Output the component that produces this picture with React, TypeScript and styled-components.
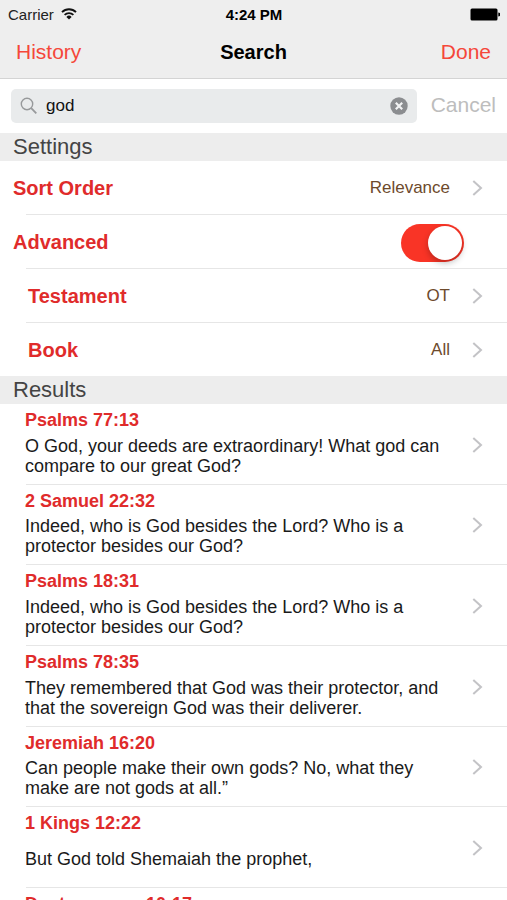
import React, { useState } from "react";
import styled, { createGlobalStyle, css } from "styled-components";

const GlobalStyle = createGlobalStyle`
  *, *::before, *::after { box-sizing: border-box; }
  html, body, #root { height: 100%; }
  body {
    margin: 0;
    overflow: hidden;
    background: #fff;
    color: #111;
    font-family: "Liberation Sans", Arial, sans-serif;
  }
  h1, h2, h3, p, ul { margin: 0; padding: 0; }
  ul { list-style: none; }
  button, input { font: inherit; border: 0; padding: 0; background: none; }
  button { cursor: pointer; }
`;

const Screen = styled.main`
  height: 100%;
  display: flex;
  flex-direction: column;
  overflow: hidden;
`;

const TopBar = styled.header`
  flex: none;
  background: #eee;
  border-bottom: 1px solid #d4d4d4;
`;

const StatusBar = styled.div`
  display: grid;
  grid-template-columns: 1fr auto 1fr;
  align-items: center;
  height: 28px;
  padding: 0 7px 0 8px;
  font-size: 15px;
  color: #222;
`;

const Carrier = styled.span`
  display: flex;
  align-items: center;
  gap: 7px;
`;

const Clock = styled.time`
  font-weight: 700;
  color: #000;
`;

const Battery = styled.svg`
  justify-self: end;
`;

const NavBar = styled.div`
  display: grid;
  grid-template-columns: 1fr auto 1fr;
  align-items: center;
  height: 50px;
  padding: 0 16px 2px;
`;

const NavButton = styled.button<{ $end?: boolean }>`
  justify-self: ${(p) => (p.$end ? "end" : "start")};
  font-size: 21px;
  line-height: 28px;
  color: #f5473a;
`;

const NavTitle = styled.h1`
  font-size: 20px;
  line-height: 28px;
  color: #000;
`;

const SearchBar = styled.form`
  flex: none;
  display: flex;
  align-items: center;
  gap: 14px;
  height: 54px;
  padding: 0 11px;
`;

const Field = styled.label`
  flex: 1;
  min-width: 0;
  display: flex;
  align-items: center;
  gap: 8px;
  height: 34px;
  padding: 0 9px;
  border-radius: 5px;
  background: #e9ebec;
`;

const FieldInput = styled.input`
  flex: 1;
  min-width: 0;
  font-size: 17px;
  line-height: 24px;
  color: #111;
  outline: none;
`;

const ClearButton = styled.button`
  display: flex;
`;

const CancelButton = styled.button`
  font-size: 21px;
  line-height: 28px;
  padding-bottom: 2px;
  color: #bdbdbd;
`;

const SectionHeader = styled.h2`
  flex: none;
  padding: 0 13px;
  background: #ededed;
  font-size: 22px;
  font-weight: 400;
  line-height: 28px;
  color: #444;
`;

const SettingList = styled.ul`
  flex: none;
`;

const ResultList = styled.ul`
  flex: none;
  display: grid;
  grid-auto-rows: minmax(81px, auto) minmax(80px, auto) minmax(81px, auto);
`;

const divider = css`
  &:not(:last-child)::after {
    content: "";
    position: absolute;
    left: 26px;
    right: 0;
    bottom: 0;
    height: 1px;
    background: #e6e6e6;
  }
`;

const SettingItem = styled.li`
  position: relative;
  ${divider}

  &:not(:last-child) {
    padding-bottom: 1px;
  }
`;

const settingRow = css<{ $nested?: boolean }>`
  display: flex;
  align-items: center;
  width: 100%;
  height: 53px;
  padding: 0 24px 0 ${(p) => (p.$nested ? 28 : 13)}px;
  text-align: left;
`;

const SettingButton = styled.button<{ $nested?: boolean }>`
  ${settingRow}
`;

const SettingLabel = styled.label<{ $nested?: boolean }>`
  ${settingRow}
  padding-right: 43px;
`;

const SettingName = styled.span`
  flex: 1;
  font-size: 20px;
  font-weight: 700;
  line-height: 28px;
  color: #e02b2b;
`;

const SettingValue = styled.span`
  margin-right: 22px;
  font-size: 17px;
  line-height: 24px;
  color: #6d4a2c;
`;

const Switch = styled.input`
  appearance: none;
  flex: none;
  display: flex;
  align-items: center;
  width: 63px;
  height: 38px;
  margin: 2px 0 0;
  padding: 0 2px;
  border-radius: 19px;
  background: #d8d8d8;
  cursor: pointer;

  &::before {
    content: "";
    width: 34px;
    height: 34px;
    border-radius: 50%;
    background: #fff;
    box-shadow: 0 3px 6px rgba(0, 0, 0, 0.25);
  }

  &:checked {
    justify-content: flex-end;
    background: #f93426;
  }
`;

const ResultItem = styled.li`
  position: relative;
  display: flex;
  ${divider}
`;

const ResultButton = styled.button`
  display: flex;
  align-items: center;
  width: 100%;
  padding: 0 24px 0 25px;
  text-align: left;
`;

const ResultBody = styled.span`
  flex: 1;
  align-self: stretch;
  display: flex;
  flex-direction: column;
  padding: 5px 20px 8px 0;
`;

const Reference = styled.span`
  font-size: 18px;
  font-weight: 700;
  line-height: 22px;
  color: #e02b2b;
`;

const Verse = styled.span`
  flex: 1;
  display: flex;
  align-items: center;
  padding-top: 3px;
  font-size: 18px;
  line-height: 20px;
  color: #1a1a1a;
`;

const Chevron = () => (
  <svg width="11" height="16" viewBox="0 0 11 16" fill="none" aria-hidden="true">
    <path d="M1.3 1 L9 8 L1.3 15" stroke="#c3c3c6" strokeWidth="2" />
  </svg>
);

const WifiIcon = () => (
  <svg width="16" height="12" viewBox="0 0 16 12" fill="none" aria-hidden="true">
    <path d="M1 4.1 A10 10 0 0 1 15 4.1" stroke="#111" strokeWidth="1.9" />
    <path d="M3.6 6.9 A6.3 6.3 0 0 1 12.4 6.9" stroke="#111" strokeWidth="1.8" />
    <path d="M8 11.6 L5.4 8.9 A3.7 3.7 0 0 1 10.6 8.9 Z" fill="#111" />
  </svg>
);

const SearchIcon = () => (
  <svg width="18" height="18" viewBox="0 0 18 18" fill="none" aria-hidden="true">
    <circle cx="7" cy="7" r="5.7" stroke="#97999b" strokeWidth="1.4" />
    <path d="M11.2 11.2 L16.3 16.3" stroke="#97999b" strokeWidth="1.8" />
  </svg>
);

const ClearIcon = () => (
  <svg width="18" height="18" viewBox="0 0 18 18" aria-hidden="true">
    <circle cx="9" cy="9" r="8.7" fill="#8b8d90" />
    <path d="M5.8 5.8 L12.2 12.2 M12.2 5.8 L5.8 12.2" stroke="#f2f3f4" strokeWidth="2.2" />
  </svg>
);

const BatteryIcon = () => (
  <Battery width="30" height="13" viewBox="0 0 30 13" role="img" aria-label="Battery full">
    <rect x="0.5" y="0.5" width="27" height="12" rx="1.5" fill="#000" />
    <path d="M28.3 4.5 A2 2 0 0 1 28.3 8.5 Z" fill="#000" />
  </Battery>
);

const results = [
  { reference: "Psalms 77:13", text: "O God, your deeds are extraordinary! What god can compare to our great God?" },
  { reference: "2 Samuel 22:32", text: "Indeed, who is God besides the Lord? Who is a protector besides our God?" },
  { reference: "Psalms 18:31", text: "Indeed, who is God besides the Lord? Who is a protector besides our God?" },
  { reference: "Psalms 78:35", text: "They remembered that God was their protector, and that the sovereign God was their deliverer." },
  { reference: "Jeremiah 16:20", text: "Can people make their own gods? No, what they make are not gods at all.”" },
  { reference: "1 Kings 12:22", text: "But God told Shemaiah the prophet," },
  { reference: "Deuteronomy 10:17", text: "" },
];

export default function App() {
  const [query, setQuery] = useState("god");
  const [advanced, setAdvanced] = useState(true);

  return (
    <Screen>
      <GlobalStyle />
      <TopBar>
        <StatusBar>
          <Carrier>
            Carrier <WifiIcon />
          </Carrier>
          <Clock>4:24 PM</Clock>
          <BatteryIcon />
        </StatusBar>
        <NavBar>
          <NavButton type="button">History</NavButton>
          <NavTitle>Search</NavTitle>
          <NavButton type="button" $end>Done</NavButton>
        </NavBar>
      </TopBar>

      <SearchBar role="search" onSubmit={(e) => e.preventDefault()}>
        <Field>
          <SearchIcon />
          <FieldInput aria-label="Search" value={query} onChange={(e) => setQuery(e.target.value)} />
          <ClearButton type="button" aria-label="Clear text" onClick={() => setQuery("")}>
            <ClearIcon />
          </ClearButton>
        </Field>
        <CancelButton type="button">Cancel</CancelButton>
      </SearchBar>

      <SectionHeader>Settings</SectionHeader>
      <SettingList>
        <SettingItem>
          <SettingButton type="button">
            <SettingName>Sort Order</SettingName>
            <SettingValue>Relevance</SettingValue>
            <Chevron />
          </SettingButton>
        </SettingItem>
        <SettingItem>
          <SettingLabel>
            <SettingName>Advanced</SettingName>
            <Switch
              type="checkbox"
              role="switch"
              checked={advanced}
              onChange={(e) => setAdvanced(e.target.checked)}
            />
          </SettingLabel>
        </SettingItem>
        <SettingItem>
          <SettingButton type="button" $nested>
            <SettingName>Testament</SettingName>
            <SettingValue>OT</SettingValue>
            <Chevron />
          </SettingButton>
        </SettingItem>
        <SettingItem>
          <SettingButton type="button" $nested>
            <SettingName>Book</SettingName>
            <SettingValue>All</SettingValue>
            <Chevron />
          </SettingButton>
        </SettingItem>
      </SettingList>

      <SectionHeader>Results</SectionHeader>
      <ResultList>
        {results.map((r) => (
          <ResultItem key={r.reference}>
            <ResultButton type="button">
              <ResultBody>
                <Reference>{r.reference}</Reference>
                <Verse>{r.text}</Verse>
              </ResultBody>
              <Chevron />
            </ResultButton>
          </ResultItem>
        ))}
      </ResultList>
    </Screen>
  );
}
